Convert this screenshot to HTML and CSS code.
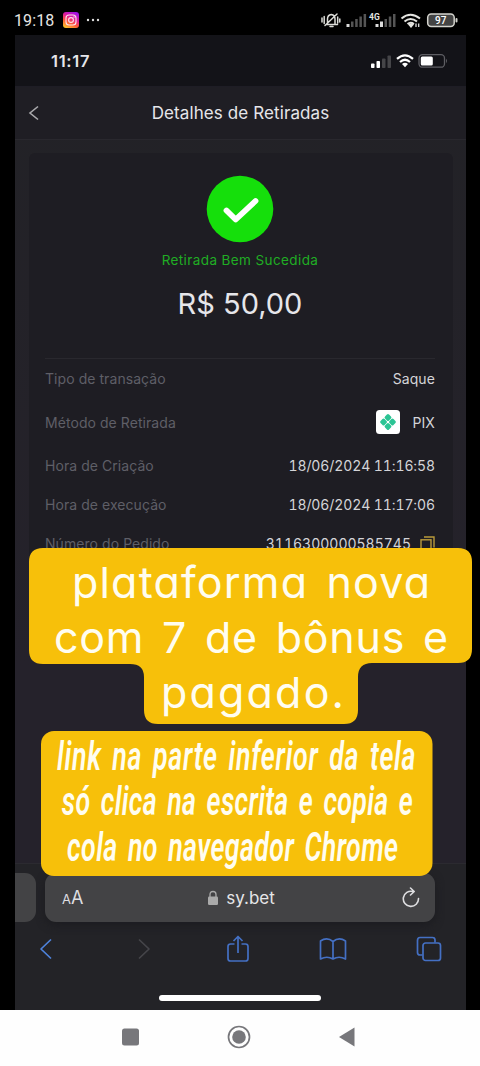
FILE: index.html
```html
<!DOCTYPE html>
<html lang="pt-BR">
<head>
<meta charset="utf-8">
<title>Detalhes de Retiradas</title>
<link rel="stylesheet" href="styles.css">
</head>
<body>
<div class="device">
  <header class="device-status">
    <span class="device-time">19:18</span>
    <svg class="insta" width="16" height="16" viewBox="0 0 16 16">
      <defs><linearGradient id="ig" x1="0.2" y1="1" x2="0.7" y2="0"><stop offset="0" stop-color="#ffc52e"/><stop offset=".35" stop-color="#ff5a36"/><stop offset=".65" stop-color="#e01c9a"/><stop offset="1" stop-color="#a012e8"/></linearGradient></defs>
      <rect width="16" height="16" rx="3" fill="url(#ig)"/>
      <g fill="none" stroke="#ffe3ee" stroke-width="1.1"><rect x="3" y="3" width="10" height="10" rx="3"/><circle cx="8" cy="8" r="2.4"/></g>
      <circle cx="11" cy="5" r=".7" fill="#fff"/>
    </svg>
    <svg class="dots" width="14" height="4" viewBox="0 0 14 4" fill="#ddd"><circle cx="2" cy="2" r="1.2"/><circle cx="7" cy="2" r="1.2"/><circle cx="12" cy="2" r="1.2"/></svg>
    <svg class="device-icons" width="140" height="18" viewBox="0 0 140 18">
      <g fill="none" stroke="#dcdcd8" stroke-width="1.5" stroke-linecap="round">
        <path d="M7 13.500h11.500M8.500 12.500V8q0-4 3.800-4.500Q16 4 16 8v4.500M11 15.500h3M6 14.500 18 3M3 7v4M5.200 5.500v7M18.700 6v6M20.800 8v3"/>
      </g>
      <g fill="#ddd"><rect x="27.500" y="13" width="3" height="3"/><rect x="56.500" y="13" width="3" height="3"/><rect x="61" y="10.500" width="3" height="5.500"/></g>
      <g fill="#555"><rect x="32" y="10.500" width="2.500" height="5.500"/><rect x="36.200" y="8" width="2.500" height="8"/><rect x="40.400" y="5.500" width="2.500" height="10.500"/><rect x="44.600" y="3" width="2.500" height="13"/><rect x="65.500" y="8" width="2.500" height="8"/><rect x="69.800" y="5.500" width="2.500" height="10.500"/><rect x="74" y="3" width="2.500" height="13"/></g>
      <text class="net" x="50" y="8.500">4G</text>
      <g fill="none" stroke="#e4e4e0" stroke-width="2"><path d="M82.500 7.500Q91.500 0 101 7.500M85.500 10.500q6-5 12.500 0M88.500 13q3-2.500 6.500 0"/></g>
      <path d="m89 13.500 3 3.500 3-3.500q-3-2-6 0z" fill="#e4e4e0"/><path d="M97 16v-3.500M99.700 12.500v3.500" stroke="#ddd" stroke-width="1.300"/>
      <rect x="108.700" y="3" width="26.500" height="12.500" rx="3.500" fill="#444" stroke="#d4d4ce" stroke-width="1.500"/>
      <rect x="136.500" y="7" width="2" height="4.500" rx="1" fill="#d4d4ce"/>
      <text class="charge" x="116" y="13">97</text>
    </svg>
  </header>

  <main class="capture">
    <div class="ios-status">
      <span class="ios-time">11:17</span>
      <svg width="80" height="18" viewBox="0 0 80 18">
        <g fill="#fff"><rect x="0" y="11.500" width="3.500" height="4.500" rx=".8"/><rect x="5.500" y="9" width="3.500" height="7" rx=".8"/></g>
        <g fill="#454548"><rect x="11" y="6.500" width="3.500" height="9.500" rx=".8"/><rect x="16.500" y="3.500" width="3.500" height="12.500" rx=".8"/></g>
        <g fill="none" stroke="#fff" stroke-width="2.200"><path d="M26 6.800q8-7 16 0M29 10q5-4.500 10 0"/></g><path d="m31 12 3 3.300 3-3.300q-3-2.500-6 0z" fill="#fff"/>
        <rect x="48" y="2.700" width="25.500" height="12.500" rx="3.500" fill="none" stroke="#5e5e63" stroke-width="1.300"/>
        <rect x="49.800" y="4.500" width="12" height="9" rx="1.500" fill="#fff"/><path d="M75 6.800q2 2 0 4.400z" fill="#5e5e63"/>
      </svg>
    </div>
    <div class="title-bar">
      <svg class="back" width="12" height="16" viewBox="0 0 12 16"><path d="M10 1.500 2 8l8 6.500" fill="none" stroke="#aaaaad" stroke-width="1.600"/></svg>
      <h1>Detalhes de Retiradas</h1>
    </div>
    <section class="card">
      <svg class="success" width="68" height="68" viewBox="0 0 68 68"><circle cx="34" cy="34" r="33.300" fill="#15df0b"/><path d="M20.500 35.500 29.700 44.500 49.500 26" fill="none" stroke="#fff" stroke-width="5.800" stroke-linecap="round" stroke-linejoin="round"/></svg>
      <p class="state">Retirada Bem Sucedida</p>
      <p class="amount">R$ 50,00</p>
      <dl class="rows">
        <div class="row"><dt>Tipo de transação</dt><dd>Saque</dd></div>
        <div class="row tall"><dt>Método de Retirada</dt><dd class="pix"><svg width="24" height="24" viewBox="0 0 24 24"><rect width="24" height="24" rx="3.500" fill="#fff"/><g fill="#2bc494" transform="rotate(45 12 12)"><rect x="6" y="6" width="5.700" height="5.700" rx="1.500"/><rect x="12.300" y="6" width="5.700" height="5.700" rx="1.500"/><rect x="6" y="12.300" width="5.700" height="5.700" rx="1.500"/><rect x="12.300" y="12.300" width="5.700" height="5.700" rx="1.500"/></g></svg><span>PIX</span></dd></div>
        <div class="row"><dt>Hora de Criação</dt><dd class="date">18/06/2024 11:16:58</dd></div>
        <div class="row"><dt>Hora de execução</dt><dd class="date">18/06/2024 11:17:06</dd></div>
        <div class="row"><dt>Número do Pedido</dt><dd class="order"><span>3116300000585745</span><svg width="15" height="15" viewBox="0 0 15 15" fill="none" stroke="#b99a3b" stroke-width="1.400"><path d="M4 1h10v10.500"/><rect x="1" y="3.800" width="10" height="10.200"/></svg></dd></div>
      </dl>
    </section>

    <footer class="browser">
      <div class="address-row">
        <div class="prev-tab"></div>
        <div class="address">
          <span class="reader"><small>A</small>A</span>
          <span class="host"><svg width="12" height="16" viewBox="0 0 12 16"><rect x="1" y="6.500" width="10" height="8.500" rx="1.300" fill="#aaa"/><path d="M3 7V4.500Q3 1.500 6 1.500T9 4.500V7" fill="none" stroke="#aaa" stroke-width="1.300"/></svg>sy.bet</span>
          <svg class="reload" width="18" height="22" viewBox="0 0 18 22" fill="none" stroke="#dedee0" stroke-width="1.600" stroke-linecap="round" stroke-linejoin="round"><path d="M16.500 11.500a7.600 7.600 0 1 1-5.500-7M8.500 1l3.700 3.500L8.500 8"/></svg>
        </div>
      </div>
      <nav class="tools">
        <svg width="14" height="22" viewBox="0 0 14 22" stroke="#4e83dc"><path d="M12 1.500 2 11l10 9.500"/></svg>
        <svg width="14" height="22" viewBox="0 0 14 22" stroke="#45454a"><path d="m2 1.500 10 9.500L2 20.500"/></svg>
        <svg width="24" height="28" viewBox="0 0 24 28" stroke="#4470c4"><path d="M8.500 9H4.500q-2.500 0-2.500 2.500v12Q2 26 4.500 26h15q2.500 0 2.500-2.500v-12Q22 9 19.500 9h-4M12 18V2M7.500 6 12 1.500 16.500 6"/></svg>
        <svg width="28" height="24" viewBox="0 0 28 24" stroke="#4470c4"><path d="M14 4.500Q8-.5 1.500 4v18Q8 18.500 14 22q6-3.500 12.500 0V4Q20-.5 14 4.500V22"/></svg>
        <svg width="26" height="26" viewBox="0 0 26 26" stroke="#4470c4"><path d="M6.500 19H4q-2.500 0-2.500-2.500v-12Q1.500 1.500 4 1.500h12.500q2.500 0 2.500 2.500v2.500"/><rect x="7" y="7" width="17.500" height="17.500" rx="2.500"/></svg>
      </nav>
      <div class="home-bar"></div>
    </footer>
  </main>

  <nav class="device-nav">
    <svg width="240" height="26" viewBox="0 0 240 26" fill="#77777b"><rect x="5" y="4.500" width="17" height="17" rx="2.500"/><circle cx="122" cy="13" r="10.500" fill="none" stroke="#77777b" stroke-width="1.700"/><circle cx="122" cy="13" r="6.800"/><path d="M222 13 237.500 3.500v19z"/></svg>
  </nav>

  <svg class="caption caption-main" width="444" height="178" viewBox="0 0 444 178">
    <path fill="#f7c00a" d="M14 0H429Q443 0 443 14V101Q443 115 429 115H343Q329 115 329 129V162Q329 176 315 176H129Q115 176 115 162V129Q115 116 101 116H14Q0 116 0 102V14Q0 0 14 0Z"/>
    <text x="43" y="50" textLength="358">plataforma nova</text>
    <text x="25" y="105" textLength="394">com 7 de bônus e</text>
    <text x="132" y="160" textLength="183">pagado.</text>
  </svg>
  <svg class="caption caption-link" width="392" height="146" viewBox="0 0 392 146">
    <rect width="391.500" height="145" rx="13" fill="#f7c00a"/>
    <g transform="scale(.67 1)">
      <text x="24" y="39.500" textLength="535">link na parte inferior da tela</text>
      <text x="31" y="84.500" textLength="524">só clica na escrita e copia e</text>
      <text x="39" y="130" textLength="494">cola no navegador Chrome</text>
    </g>
  </svg>
</div>
</body>
</html>
```
FILE: styles.css
```css
* { box-sizing: border-box; }
body, h1, p, dl, dd { margin: 0; }
body { background: #000; font-family: Inter, Roboto, sans-serif; color: #e6e6ea; }
svg { display: block; flex: none; }

.device { position: relative; width: 480px; height: 1066px; overflow: hidden; display: flex; flex-direction: column; background: #000; }
.device-status { height: 35px; padding: 5px 17px 0 14px; display: flex; align-items: center; }
.device-time { width: 49px; padding-top: 1px; font: 400 16px Roboto, sans-serif; letter-spacing: .1px; color: #e6e6e3; }
.dots { margin-left: 7px; }
.device-icons { margin-left: auto; margin-right: 4px; }
.net { font: 700 8.5px Roboto, sans-serif; fill: #e4e4e0; }
.charge { font: 500 10px Roboto, sans-serif; fill: #fff; }

.capture { width: 451px; height: 975px; margin-left: 15px; display: flex; flex-direction: column; background: linear-gradient(#222226, #25222b 65%); }
.ios-status { height: 52px; padding: 1px 15px 0 36px; display: flex; align-items: center; justify-content: space-between; background: #131318; border-bottom: 1px solid #1e1d25; }
.ios-time { font-size: 16.5px; font-weight: 600; letter-spacing: .7px; }
.title-bar { height: 53px; display: flex; align-items: center; justify-content: center; position: relative; background: #1f1e24; border-bottom: 1px solid #29282e; }
.title-bar h1 { font-size: 17px; font-weight: 400; letter-spacing: .1px; }
.back { position: absolute; left: 13px; top: 18px; }

.card { width: 424px; height: 430px; margin: 13px 0 0 14px; padding: 22px 18px 0 16px; border-radius: 6px; background: #1e1d23; display: flex; flex-direction: column; align-items: center; }
.state { margin-top: 7px; height: 20px; font-size: 13.5px; line-height: 20px; letter-spacing: .4px; color: #20ad24; }
.amount { margin-top: 14px; height: 40px; font-size: 29px; line-height: 40px; }
.rows { width: 390px; margin-top: 34px; border-top: 1px solid #29282e; }
.row { height: 39px; display: flex; align-items: center; justify-content: space-between; font-size: 14px; letter-spacing: .1px; }
.row.tall { height: 48px; }
.row dt { color: #5f5f67; letter-spacing: .06px; }
.row dd { color: #d4d4d8; font-feature-settings: "tnum" 1; }
.pix { display: flex; align-items: center; gap: 12px; }
.row .date { letter-spacing: -.1px; }
.order { display: flex; align-items: center; gap: 9px; }
.row .order { letter-spacing: 0; }

.browser { margin-top: auto; height: 147px; padding-top: 9px; background: #232327; border-top: 1px solid #2b2a30; }
.address-row { display: flex; gap: 9px; height: 49px; }
.prev-tab { width: 21px; background: #434345; border-radius: 0 11px 11px 0; }
.address { width: 390px; padding: 0 15px 0 17px; border-radius: 11px; background: #434345; display: grid; grid-template-columns: 1fr auto 1fr; align-items: center; box-shadow: 0 3px 8px #1c1c20; }
.reader { font-size: 18px; color: #dedee0; }
.reader small { font-size: 13px; }
.host { display: flex; align-items: center; gap: 7px; font-size: 17px; color: #e6e6e8; }
.reload { justify-self: end; }
.tools { height: 54px; padding: 0 24px 0 24px; display: grid; grid-template-columns: 98px 87px 95px 97px 26px; align-items: center; }
.tools svg { fill: none; stroke-width: 1.7; stroke-linejoin: round; }
.tools svg:nth-child(3) { margin-left: 2px; }
.home-bar { width: 162px; height: 6px; margin: 19px 0 0 144px; border-radius: 3px; background: #fff; }

.device-nav { flex: 1; padding: 14px 0 0 117px; background: #fefefe; }
.caption { position: absolute; overflow: visible; }
.caption-main { left: 29px; top: 548px; }
.caption-main text { font: 400 43px Inter, sans-serif; font-feature-settings: "cv11" 1; word-spacing: 5px; fill: #fffdf0; }
.caption-link { left: 41px; top: 731px; }
.caption-link text { font: italic 600 40px Roboto, sans-serif; word-spacing: 5px; fill: #fffdf0; }
```
